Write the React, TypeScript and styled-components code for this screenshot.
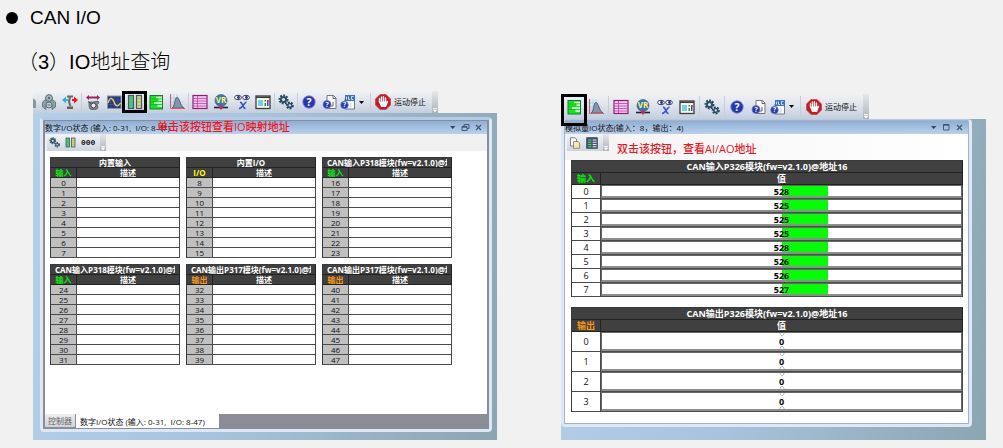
import React from 'react';
import styled, { createGlobalStyle } from 'styled-components';

const uiFont = `"Open Sans", "Noto Sans CJK SC", sans-serif`;

const GlobalStyle = createGlobalStyle`
  * { box-sizing: border-box; }
  body { margin: 0; background: #f1f1f1; font-family: ${uiFont}; color: #111; }
  button { border: 0; padding: 0; background: none; font: inherit; color: inherit; }
  svg { display: block; flex: none; }
`;

const Page = styled.main`
  padding: 6px 17px 8px 6px;
`;

const Heading = styled.h1`
  display: flex;
  align-items: center;
  gap: 12px;
  margin: 0;
  font: 400 19px/24px "Liberation Sans", sans-serif;
  color: #000;
`;

const Bullet = styled.span`
  width: 12px;
  height: 12px;
  border-radius: 50%;
  background: #000;
`;

const SubHeading = styled.h2`
  margin: 18px 0 0 12px;
  font: 300 20px/28px "Liberation Sans", "Noto Sans CJK SC", sans-serif;
  color: #000;
`;

const Figures = styled.div`
  display: flex;
  align-items: flex-end;
  gap: 64px;
  margin: 15px 0 0 27px;
`;

const Figure = styled.section<{ $grow: number }>`
  flex: ${p => p.$grow} 1 0;
  min-width: 0;
`;

const Toolbar = styled.div<{ $height: number; $cell: number }>`
  --cell: ${p => p.$cell}px;
  --after: ${p => (p.$cell === 21 ? 0 : 1)}px;
  display: flex;
  align-items: stretch;
  width: fit-content;
  height: ${p => p.$height}px;
  padding-left: ${p => (p.$cell === 21 ? 0 : 2)}px;
  background: linear-gradient(#f0f1f3, #dfe4ec 45%, #c3cedd);
`;

const Tool = styled.button`
  position: relative;
  display: flex;
  align-items: center;
  justify-content: center;
  width: var(--cell);
`;

const CutTool = styled(Tool)`
  width: 5px;
  justify-content: flex-end;
  overflow: hidden;
  padding-right: 1px;
`;

const DropTool = styled(Tool)`
  width: 29px;
  justify-content: flex-start;
  gap: 3px;
`;

const StopTool = styled(Tool)`
  width: auto;
  gap: 3px;
  padding: 0 6px 0 4px;
  font-size: 8px;
  line-height: 12px;
  white-space: nowrap;
`;

const Marker = styled.span<{ $drop: number }>`
  position: absolute;
  z-index: 2;
  inset: 0 -2px -${p => p.$drop}px -2px;
  border: 3px solid #000;
`;

const Divider = styled.span`
  width: 1px;
  margin: 2px var(--after) 2px 1px;
  background: #c9ced6;
`;

const Grip = styled.span`
  display: flex;
  align-items: flex-end;
  justify-content: center;
  width: 6px;
  padding-bottom: 1px;
  background: linear-gradient(#e6e7e9, #aeb2b8);
`;

const Desktop = styled.div<{ $pad: string }>`
  padding: ${p => p.$pad};
  background: linear-gradient(100deg, #b5cfe9 0%, #a9c3dc 45%, #8ba5b1 100%);
`;

const Window = styled.div<{ $frame: string; $edge: number; $top: number }>`
  border: 3px solid #dce8f8;
  border-top: ${p => p.$top}px solid #b4cbe5;
  border-radius: 4px;
  background: ${p => p.$frame};
  padding: 1px ${p => p.$edge}px ${p => (p.$edge === 1 ? 1 : 0)}px;
`;

const TitleBar = styled.header`
  position: relative;
  display: flex;
  align-items: center;
  justify-content: space-between;
  height: 13px;
  padding-right: 4px;
  background: linear-gradient(#8eaed5, #bad1eb);
  font-size: 8px;
  line-height: 13px;
  white-space: nowrap;
`;

const TitleButtons = styled.div`
  display: flex;
  gap: 4px;
`;

const Note = styled.span`
  display: block;
  font: 500 11px/14px ${uiFont};
  color: #f4141c;
  white-space: nowrap;
`;

const TitleNote = styled(Note)`
  position: absolute;
  left: 112px;
  top: -1px;
`;

const SubBar = styled.div<{ $height: number }>`
  display: flex;
  align-items: flex-start;
  gap: 8px;
  height: ${p => p.$height}px;
  padding-left: 2px;
  background: ${p => (p.$height > 20 ? 'linear-gradient(90deg, #f3f3f4, #fff)' : '#f0f0f0')};
`;

const SubTools = styled.div`
  display: flex;
  align-items: stretch;
  gap: 5px;
  height: 17px;
  padding-left: 2px;
  background: linear-gradient(#f3f4f6, #cdd4df);
`;

const SubTool = styled.button`
  display: flex;
  align-items: center;
  font: 700 8px/10px "Liberation Mono", monospace;
`;

const NoteSlot = styled.div`
  padding-top: 8px;
`;

const DigitalBody = styled.div`
  display: grid;
  grid-template-columns: repeat(3, minmax(0, 1fr));
  gap: 6px;
  padding: 6px 35px 49px 5px;
  background: #fff;
`;

const Grid = styled.table`
  width: 100%;
  border-spacing: 0;
  table-layout: fixed;
  border: solid #3a3a3a;
  border-width: 1px 0 0 1px;
  text-align: center;

  th, td {
    padding: 0;
    border: solid #4b4b4b;
    border-width: 0 1px 1px 0;
    overflow: hidden;
    white-space: nowrap;
  }
`;

const Head = styled.th<{ $color?: string }>`
  background: #404040;
  color: ${p => p.$color ?? '#fff'};
  font-weight: 700;
  && { border-color: #222; }
`;

const DigitalGrid = styled(Grid)`
  font-size: 8px;
  line-height: 9px;
  td { height: 10px; background: #fff; }
  tbody th { background: #c0c0c0; font-weight: 400; }
`;

const Clip = styled.div`
  margin: 0 4px;
  overflow: hidden;
`;

const TabStrip = styled.div`
  display: flex;
  height: 15px;
`;

const Tab = styled.button<{ $active?: boolean }>`
  height: ${p => (p.$active ? 14 : 13)}px;
  padding: 0 ${p => (p.$active ? '14px 0 4px' : '3px')};
  border-right: 1px solid #8a8c96;
  background: ${p => (p.$active ? '#fff' : 'linear-gradient(#eeeeef, #d2d2d5)')};
  color: ${p => (p.$active ? '#111' : '#666')};
  font-size: 8px;
  line-height: 13px;
  white-space: nowrap;
`;

const AnalogBody = styled.div`
  display: grid;
  gap: 10px;
  padding: 0 5px 11px 6px;
  background: #fff;
`;

const AnalogGrid = styled(Grid)`
  font-size: 9px;
  line-height: 11px;
  tbody th { background: #fff; font-weight: 400; }
`;

const Value = styled.div<{ $height: number }>`
  position: relative;
  display: flex;
  align-items: center;
  justify-content: center;
  height: ${p => p.$height}px;
  border: 1px solid #666;
  border-bottom-width: 2px;
  border-bottom-color: #8d8d8d;
  background: #fff;
  font-weight: 700;
  color: #000;
`;

const Bar = styled.span`
  position: absolute;
  left: 50%;
  top: 0;
  bottom: 0;
  background: #0f0;
`;

const Digits = styled.span`
  position: relative;
`;

const Thumb = styled.svg`
  position: absolute;
  left: calc(50% - 3px);
  top: 0;
`;

const SvgIcon = ({ children, size = 16 }: { children: React.ReactNode; size?: number }) => (
  <svg width={size} height={size} viewBox="0 0 16 16" aria-hidden="true">{children}</svg>
);

const cog = (cx: number, cy: number, r: number, hole: string) => (
  <g>
    <circle cx={cx} cy={cy} r={r} fill="none" stroke="#24465c" strokeWidth="2" strokeDasharray="1.8 1.2" />
    <circle cx={cx} cy={cy} r={r - 0.4} fill="#2b5068" />
    <circle cx={cx} cy={cy} r={r / 2.6} fill={hole} />
  </g>
);

const GearsIcon = ({ size = 16 }: { size?: number }) => (
  <SvgIcon size={size}>{cog(5.5, 5.5, 4, '#dce3ea')}{cog(11.8, 11.4, 3, '#dce3ea')}</SvgIcon>
);

const TeachIcon = () => (
  <SvgIcon>
    <path d="M5 5 1.500 8v5l3.500 2.500v-4L6.500 9h3l1.500 2.500v4l3.500-2.500V8L11 5z" fill="#8ba0a5" stroke="#566f77" strokeWidth=".8" />
    <circle cx="8" cy="4" r="3.400" fill="#a8b8bb" stroke="#566f77" />
    <circle cx="8" cy="4" r="1.200" fill="#546b72" />
    <circle cx="8" cy="11" r="3" fill="#c3ced1" stroke="#566f77" />
    <path d="M6.500 11h3" stroke="#566f77" />
  </SvgIcon>
);

const RobotIcon = () => (
  <SvgIcon>
    <path d="M16 6l-4-3.500V5h-2v2h2v2.500z" fill="#f01818" />
    <path d="M0 6l4-3.500V5h2v2H4v2.500z" fill="#1fb4f0" />
    <path d="M5 2.500h6M8 3l-1 5 1.500 4" fill="none" stroke="#6d6864" strokeWidth="2" />
    <path d="M5 15v-2.500h6V15z" fill="#66605d" />
  </SvgIcon>
);

const AxisIcon = () => (
  <SvgIcon>
    <path d="M1 3.500 4 1v1.500h8V1l3 2.500L12 6V4.500H4V6z" fill="#a5215c" />
    <path d="M4 8h4l5-1 1 2-2 1 1 4-3 2-5-1-1-3z" fill="#7f8c92" stroke="#3f4b51" strokeWidth=".7" />
    <circle cx="8.500" cy="11.500" r="2.500" fill="#e6ebee" stroke="#39454b" />
    <path d="M3 7.500l3 2" stroke="#39454b" />
  </SvgIcon>
);

const ScopeIcon = () => (
  <SvgIcon>
    <rect x="1.500" y="2" width="13.500" height="12.500" fill="#24387c" stroke="#8793ad" />
    <path d="M4.800 2v12M8.300 2v12M11.700 2v12M2 6h13M2 10.500h13" stroke="#52659e" strokeWidth=".5" />
    <path d="M2 9c2-6 4-6 6-1s4 5 6.500 1" fill="none" stroke="#ecd45a" strokeWidth="1.400" />
  </SvgIcon>
);

const IoIcon = ({ size = 16 }: { size?: number }) => (
  <SvgIcon size={size}>
    <rect x="1.500" y="1.500" width="5" height="13" fill="#43ce70" stroke="#46566d" strokeWidth="1.200" />
    <rect x="9.500" y="1.500" width="5" height="13" fill="#d8d570" stroke="#46566d" strokeWidth="1.200" />
    <path d="M2.500 4.500h3M2.500 8h3M2.500 11.500h3M10.500 4.500h3M10.500 8h3M10.500 11.500h3" stroke="#6c9474" strokeWidth=".5" />
  </SvgIcon>
);

const AnalogIcon = () => (
  <SvgIcon>
    <rect x="2" y="1.500" width="12.500" height="13.500" fill="#12e61d" stroke="#197b32" />
    <path d="M8 3.500h6M10.500 6.300h3.500M6 9h8M9.500 12h4.500" stroke="#fff" strokeWidth="1.500" />
    <path d="M2.500 5h8M2.500 7.700h7M2.500 10.500h7" stroke="#0a9c18" strokeWidth=".5" />
  </SvgIcon>
);

const ChartIcon = () => (
  <SvgIcon>
    <path d="M2 0v14M5 0v14M8 0v14M0 4h10M0 8h14M0 11h14" stroke="#8acdec" strokeWidth=".6" />
    <path d="M3 14C6 13 5.500 3.500 8 3.500S11 12 15 14z" fill="#8794a8" stroke="#506580" />
    <path d="M1.500 0v14.500H16" fill="none" stroke="#e35b62" />
  </SvgIcon>
);

const TableIcon = () => (
  <SvgIcon>
    <rect x="1" y="1.500" width="14" height="13" fill="#f4c6ef" stroke="#8a226f" strokeWidth="1.200" />
    <path d="M1 4.500h14M5.500 2v12M1 7h14M1 9.500h14M1 12h14" stroke="#bd45a7" strokeWidth=".8" />
  </SvgIcon>
);

const VrIcon = () => (
  <SvgIcon>
    <circle cx="8" cy="6.500" r="6" fill="#3977b6" stroke="#265889" strokeWidth=".6" />
    <path d="M1 13.500h14" stroke="#222" strokeWidth="1.600" />
    <path d="M8 10l2 3.500-2 2.500-2-2.500z" fill="#c72864" />
    <text x="8" y="9" textAnchor="middle" fontFamily="Open Sans" fontSize="8" fontWeight="700" fill="#fff45c">VR</text>
  </SvgIcon>
);

const WatchIcon = () => (
  <SvgIcon>
    <ellipse cx="4" cy="3.500" rx="3.400" ry="2.200" fill="#fff" stroke="#333b63" />
    <ellipse cx="12" cy="3.500" rx="3.400" ry="2.200" fill="#fff" stroke="#333b63" />
    <circle cx="4.500" cy="3.500" r="1.400" fill="#22307b" />
    <circle cx="12.500" cy="3.500" r="1.400" fill="#22307b" />
    <path d="M6 8.500c3-1 2 6 5.500 6M12.500 8c-2 0-4 6.500-7.500 6.500" fill="none" stroke="#3355cf" strokeWidth="1.600" />
  </SvgIcon>
);

const HmiIcon = () => (
  <SvgIcon>
    <rect x="1" y="2" width="14" height="12.500" fill="#f6f6f2" stroke="#3b3b3b" strokeWidth="1.300" />
    <path d="M1 3.300h14" stroke="#3b3b3b" strokeWidth="1.500" />
    <rect x="3" y="6" width="5" height="6" fill="#72d0df" />
    <path d="M9.500 6h1.500v1.500H9.500zM9.500 9h1.500v3H9.500z" fill="#21962f" />
    <path d="M12 6h1.500v6H12z" fill="#2a4bc9" />
    <path d="M12 6h1.500v2H12z" fill="#e42c2c" />
  </SvgIcon>
);

const helpBall = (cx: number, cy: number, r: number) => (
  <g>
    <circle cx={cx} cy={cy} r={r} fill="#2637b3" stroke="#7181c5" strokeWidth=".8" />
    <text x={cx} y={cy + r * 0.6} textAnchor="middle" fontFamily="Open Sans" fontSize={r * 1.7} fontWeight="700" fill="#fff">?</text>
  </g>
);

const HelpIcon = () => <SvgIcon>{helpBall(8, 8, 6.2)}</SvgIcon>;

const HelpDocIcon = () => (
  <SvgIcon>
    <path d="M5 1.500h6.500L14 4v10.500H5z" fill="#fbfbfb" stroke="#777" />
    <path d="M11 1.500V4.500h3M11 8v4h-2" fill="none" stroke="#666" />
    {helpBall(5, 10.500, 4)}
  </SvgIcon>
);

const BasHelpIcon = () => (
  <SvgIcon>
    <path d="M5 5h9.500v10H5z" fill="#fbfbfb" stroke="#777" />
    <path d="M5 1h10v6H5z" fill="#3f72b5" />
    <path d="M6.500 2.500v3M8.500 2.500v3h1.500M13.500 2.500h-2v3h2M11 9v4h-2" fill="none" stroke="#c4d8f0" />
    {helpBall(4.500, 11, 3.800)}
  </SvgIcon>
);

const StopIcon = () => (
  <SvgIcon>
    <path d="M5 .500h6L15.500 5v6L11 15.500H5L.500 11V5z" fill="#d3161c" stroke="#a34b4b" strokeWidth=".7" />
    <path d="M4.500 8V4.500M6.500 7.500V3M8.500 7.500V2.800M10.500 8V4" stroke="#fff" strokeWidth="1.400" strokeLinecap="round" />
    <path d="M3.800 7.500h7.500l1.500-1 .5 1-2.300 5.500H6z" fill="#fff" />
  </SvgIcon>
);

const CopyIcon = () => (
  <SvgIcon size={12}>
    <path d="M2 1h6l2 2v9H2z" fill="#f8f9fc" stroke="#536079" />
    <path d="M6 6h6l2 2v7H6z" fill="#f5e6b2" stroke="#7b7155" />
  </SvgIcon>
);

const ListIcon = () => (
  <SvgIcon size={12}>
    <rect x="1" y="1" width="14" height="14" fill="#49596f" stroke="#222e44" />
    <path d="M3 4h4M3 7h4M3 10h4M3 13h4" stroke="#3ee05c" strokeWidth="1.400" />
    <path d="M9 4h5M9 7h5M9 10h5M9 13h5" stroke="#e4edf4" strokeWidth="1.400" />
  </SvgIcon>
);

const CutIcon = () => (
  <svg width="4" height="14" viewBox="0 0 4 14" aria-hidden="true"><path d="M0 3l3 3v7H0z" fill="#87989d" /></svg>
);

const Caret = () => (
  <svg width="5" height="3" viewBox="0 0 5 3" aria-hidden="true"><path d="M0 0h5L2.500 3z" fill="#000" /></svg>
);

const GripMark = () => (
  <svg width="4" height="4" viewBox="0 0 4 4" aria-hidden="true"><path d="M0 .500h4M.500 2h3L2 4z" stroke="#fff" strokeWidth=".8" fill="#fff" /></svg>
);

const WindowButtons = ({ restore }: { restore?: boolean }) => (
  <TitleButtons>
    <button aria-label="菜单"><svg width="9" height="9" viewBox="0 0 9 9"><path d="M2 3h5.500L4.700 6z" fill="#39475a" /></svg></button>
    <button aria-label="窗口">
      <svg width="9" height="9" viewBox="0 0 9 9" fill="none" stroke="#46566b">
        {restore ? <path d="M3 3.500V1.500h5v4H6M1 3.500h5v4H1zM1 4.200h5" /> : <path d="M1.500 1.500h5.500v5.500H1.500zM1.500 2.200h5.500" />}
      </svg>
    </button>
    <button aria-label="关闭"><svg width="9" height="9" viewBox="0 0 9 9"><path d="M2 2l5 5M7 2L2 7" stroke="#46566b" strokeWidth="1.200" /></svg></button>
  </TitleButtons>
);

const SharedTools = () => (
  <>
    <Tool aria-label="数据表"><TableIcon /></Tool>
    <Tool aria-label="VR"><VrIcon /></Tool>
    <Tool aria-label="监视变量"><WatchIcon /></Tool>
    <Tool aria-label="界面"><HmiIcon /></Tool>
    <Divider />
    <Tool aria-label="设置"><GearsIcon /></Tool>
    <Divider />
    <Tool aria-label="帮助"><HelpIcon /></Tool>
    <Tool aria-label="帮助文档"><HelpDocIcon /></Tool>
    <DropTool aria-label="指令帮助"><BasHelpIcon /><Caret /></DropTool>
    <Divider />
    <StopTool><StopIcon />运动停止</StopTool>
    <Grip><GripMark /></Grip>
  </>
);

const input = '#00f000';
const output = '#f79a10';

const modules = [
  { title: '内置输入', kind: '输入', color: input, start: 0 },
  { title: '内置I/O', kind: 'I/O', color: '#ffff00', start: 8 },
  { title: 'CAN输入P318模块(fw=v2.1.0)@地址', kind: '输入', color: input, start: 16 },
  { title: 'CAN输入P318模块(fw=v2.1.0)@地址', kind: '输入', color: input, start: 24 },
  { title: 'CAN输出P317模块(fw=v2.1.0)@地址', kind: '输出', color: output, start: 32 },
  { title: 'CAN输出P317模块(fw=v2.1.0)@地址', kind: '输出', color: output, start: 40 },
];

type Module = (typeof modules)[number];

const DigitalTable = ({ title, kind, color, start }: Module) => (
  <DigitalGrid>
    <colgroup><col style={{ width: 26 }} /><col /></colgroup>
    <thead>
      <tr><Head colSpan={2}><Clip>{title}</Clip></Head></tr>
      <tr><Head $color={color} scope="col">{kind}</Head><Head scope="col">描述</Head></tr>
    </thead>
    <tbody>
      {Array.from({ length: 8 }, (_, i) => (
        <tr key={i}><th scope="row">{start + i}</th><td /></tr>
      ))}
    </tbody>
  </DigitalGrid>
);

interface AnalogProps { title: string; kind: string; color: string; values: number[]; rowHeight: number; slider?: boolean }

const AnalogTable = ({ title, kind, color, values, rowHeight, slider }: AnalogProps) => (
  <AnalogGrid>
    <colgroup><col style={{ width: 29 }} /><col /></colgroup>
    <thead>
      <tr><Head colSpan={2}>{title}</Head></tr>
      <tr><Head $color={color} scope="col">{kind}</Head><Head scope="col">值</Head></tr>
    </thead>
    <tbody>
      {values.map((value, i) => (
        <tr key={i}>
          <th scope="row">{i}</th>
          <td>
            <Value $height={rowHeight}>
              {slider ? (
                <Thumb width="6" height="16" viewBox="0 0 6 16" fill="none" stroke="#bbb" aria-hidden="true">
                  <path d="M1 0v1l2 2 2-2V0M1 16v-1l2-2 2 2v1" />
                </Thumb>
              ) : (
                <Bar style={{ width: `${(value / 4096) * 100}%` }} />
              )}
              <Digits>{value}</Digits>
            </Value>
          </td>
        </tr>
      ))}
    </tbody>
  </AnalogGrid>
);

export default function App() {
  return (
    <Page>
      <GlobalStyle />
      <Heading><Bullet />CAN I/O</Heading>
      <SubHeading>（3）IO地址查询</SubHeading>
      <Figures>
        <Figure $grow={464}>
          <Toolbar $height={22} $cell={21}>
            <CutTool aria-label="工具"><CutIcon /></CutTool>
            <Tool aria-label="示教"><TeachIcon /></Tool>
            <Tool aria-label="机械手"><RobotIcon /></Tool>
            <Divider />
            <Tool aria-label="轴"><AxisIcon /></Tool>
            <Tool aria-label="示波器"><ScopeIcon /></Tool>
            <Tool aria-label="数字I/O状态"><IoIcon /><Marker $drop={0} /></Tool>
            <Tool aria-label="模拟量IO状态"><AnalogIcon /></Tool>
            <Tool aria-label="曲线"><ChartIcon /></Tool>
            <Divider />
            <SharedTools />
          </Toolbar>
          <Desktop $pad="4px 5px 8px 7px">
            <Window $frame="#8a8c96" $edge={2} $top={3}>
              <TitleBar>
                <span>数字I/O状态 (输入: 0-31,&nbsp; I/O: 8-47)</span>
                <TitleNote>单击该按钮查看IO映射地址</TitleNote>
                <WindowButtons restore />
              </TitleBar>
              <SubBar $height={17}>
                <SubTools>
                  <SubTool aria-label="设置"><GearsIcon size={11} /></SubTool>
                  <SubTool aria-label="I/O"><IoIcon size={11} /></SubTool>
                  <SubTool>000</SubTool>
                  <Grip><GripMark /></Grip>
                </SubTools>
              </SubBar>
              <DigitalBody>
                {modules.map(m => <DigitalTable key={m.start} {...m} />)}
              </DigitalBody>
              <TabStrip>
                <Tab>控制器</Tab>
                <Tab $active>数字I/O状态 (输入: 0-31,&nbsp; I/O: 8-47)</Tab>
              </TabStrip>
            </Window>
          </Desktop>
        </Figure>
        <Figure $grow={425}>
          <Toolbar $height={25} $cell={22}>
            <Tool aria-label="模拟量IO状态"><AnalogIcon /><Marker $drop={7} /></Tool>
            <Tool aria-label="曲线"><ChartIcon /></Tool>
            <Divider />
            <SharedTools />
          </Toolbar>
          <Desktop $pad="0 14px 13px 0">
            <Window $frame="#a9b0bf" $edge={1} $top={1}>
              <TitleBar>
                <span>模拟量IO状态(输入：8，输出：4)</span>
                <WindowButtons />
              </TitleBar>
              <SubBar $height={26}>
                <SubTools>
                  <SubTool aria-label="复制"><CopyIcon /></SubTool>
                  <SubTool aria-label="列表"><ListIcon /></SubTool>
                  <Grip><GripMark /></Grip>
                </SubTools>
                <NoteSlot><Note>双击该按钮，查看AI/AO地址</Note></NoteSlot>
              </SubBar>
              <AnalogBody>
                <AnalogTable
                  title="CAN输入P326模块(fw=v2.1.0)@地址16"
                  kind="输入"
                  color={input}
                  values={[528, 525, 525, 525, 528, 526, 526, 527]}
                  rowHeight={13}
                />
                <AnalogTable
                  title="CAN输出P326模块(fw=v2.1.0)@地址16"
                  kind="输出"
                  color={output}
                  values={[0, 0, 0, 0]}
                  rowHeight={19}
                  slider
                />
              </AnalogBody>
            </Window>
          </Desktop>
        </Figure>
      </Figures>
    </Page>
  );
}
